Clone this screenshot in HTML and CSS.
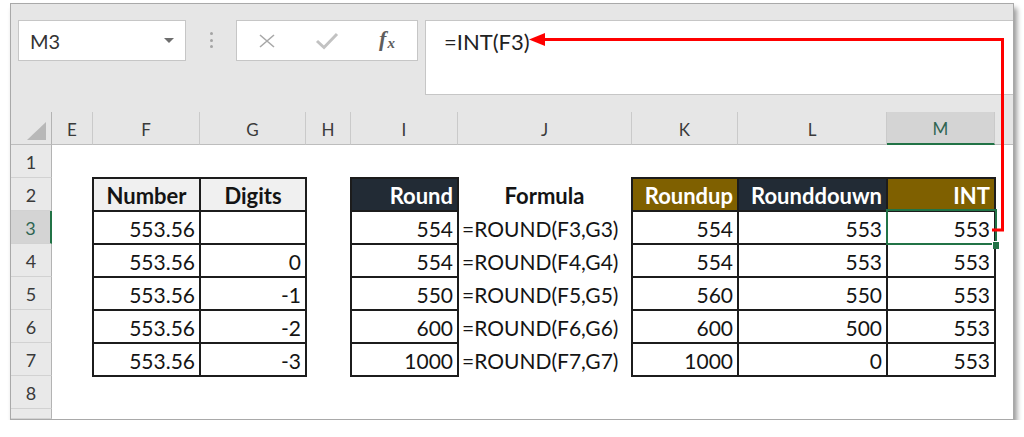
FILE: index.html
```html
<!DOCTYPE html>
<html>
<head>
<meta charset="utf-8">
<link rel="stylesheet" href="styles.css">
</head>
<body>
<div class="window">
  <div class="toolbar">
    <div class="namebox"><span>M3</span><svg class="caret" width="10" height="6" viewBox="0 0 10 6"><polygon points="0,0 10,0 5,5" fill="#6e6e6e"/></svg></div>
    <div class="grip"><i></i><i></i><i></i></div>
    <div class="fbuttons">
      <span class="fbtn"><svg width="18" height="14" viewBox="0 0 18 14"><path d="M2 1 L16 13 M16 1 L2 13" stroke="#a8a8a8" stroke-width="1.6" fill="none"/></svg></span>
      <span class="fbtn"><svg width="24" height="18" viewBox="0 0 24 18"><path d="M2 9 L9 15.5 L22 2" stroke="#c2c2c2" stroke-width="3" fill="none"/></svg></span>
      <span class="fbtn fx"><span class="fxtext">f<span class="fxsub">x</span></span></span>
    </div>
    <div class="formula">=INT(F3)</div>
  </div>
  <div class="sheet">
    <div class="corner"><svg width="19" height="18" viewBox="0 0 19 18"><polygon points="19,0 19,18 0,18" fill="#b8b8b8"/></svg></div>
    <div class="ch">E</div>
    <div class="ch">F</div>
    <div class="ch">G</div>
    <div class="ch">H</div>
    <div class="ch">I</div>
    <div class="ch">J</div>
    <div class="ch">K</div>
    <div class="ch">L</div>
    <div class="ch sel">M</div>
    <div class="ch last"></div>

    <div class="rh">1</div>

    <div class="rh">2</div>
    <div class="c b cf hg ctr bold">Number</div>
    <div class="c b cg hg ctr bold">Digits</div>
    <div class="c b ci hn r bold">Round</div>
    <div class="c cj ctr bold">Formula</div>
    <div class="c b ck hb r bold">Roundup</div>
    <div class="c b cl hn r bold">Rounddouwn</div>
    <div class="c b cm hb r bold">INT</div>

    <div class="rh sel">3</div>
    <div class="c b cf r">553.56</div>
    <div class="c b cg r"></div>
    <div class="c b ci r">554</div>
    <div class="c cj">=ROUND(F3,G3)</div>
    <div class="c b ck r">554</div>
    <div class="c b cl r">553</div>
    <div class="c b cm r active">553<span class="selbox"></span><span class="handle"></span></div>

    <div class="rh">4</div>
    <div class="c b cf r">553.56</div>
    <div class="c b cg r">0</div>
    <div class="c b ci r">554</div>
    <div class="c cj">=ROUND(F4,G4)</div>
    <div class="c b ck r">554</div>
    <div class="c b cl r">553</div>
    <div class="c b cm r">553</div>

    <div class="rh">5</div>
    <div class="c b cf r">553.56</div>
    <div class="c b cg r">-1</div>
    <div class="c b ci r">550</div>
    <div class="c cj">=ROUND(F5,G5)</div>
    <div class="c b ck r">560</div>
    <div class="c b cl r">550</div>
    <div class="c b cm r">553</div>

    <div class="rh">6</div>
    <div class="c b cf r">553.56</div>
    <div class="c b cg r">-2</div>
    <div class="c b ci r">600</div>
    <div class="c cj">=ROUND(F6,G6)</div>
    <div class="c b ck r">600</div>
    <div class="c b cl r">500</div>
    <div class="c b cm r">553</div>

    <div class="rh">7</div>
    <div class="c b cf r">553.56</div>
    <div class="c b cg r">-3</div>
    <div class="c b ci r">1000</div>
    <div class="c cj">=ROUND(F7,G7)</div>
    <div class="c b ck r">1000</div>
    <div class="c b cl r">0</div>
    <div class="c b cm r">553</div>

    <div class="rh">8</div>
    <div class="rh"></div>
  </div>
</div>
<svg class="arrow" width="1024" height="437" viewBox="0 0 1024 437">
  <path d="M542 39.5 H1002.5 V230 H992" stroke="#ff0000" stroke-width="3" fill="none"/>
  <polygon points="529,39.5 545,33 545,46" fill="#ff0000"/>
</svg>
</body>
</html>
```
FILE: styles.css
```css
body {
  margin: 0;
  background: #ffffff;
  font-family: Lato, "Open Sans", sans-serif;
}

.window {
  margin: 3px 0 0 10px;
  width: 1002px;
  height: 415px;
  border: 1px solid #a9a9a9;
  background: #e6e6e6;
  box-shadow: 3px 5px 5px rgba(0, 0, 0, 0.4);
  display: flex;
  flex-direction: column;
}

.toolbar {
  height: 108px;
  flex: none;
  box-sizing: border-box;
  padding: 16px 0 0 7px;
  display: flex;
  align-items: flex-start;
}

.namebox {
  width: 168px;
  height: 41px;
  box-sizing: border-box;
  border: 1px solid #c6c6c6;
  background: #fff;
  display: flex;
  align-items: center;
  justify-content: space-between;
  padding: 0 11px 0 11px;
  font-size: 20px;
  color: #333;
}

.caret {
  display: block;
}

.grip {
  margin: 12px 0 0 24px;
  width: 3px;
  display: flex;
  flex-direction: column;
  gap: 3.5px;
}

.grip i {
  display: block;
  width: 3px;
  height: 3px;
  border-radius: 50%;
  background: #a4a4a4;
}

.fbuttons {
  margin-left: 23px;
  width: 182px;
  height: 41px;
  box-sizing: border-box;
  border: 1px solid #c6c6c6;
  background: #fff;
  display: flex;
  align-items: center;
}

.fbtn {
  width: 60px;
  display: flex;
  justify-content: center;
  align-items: center;
}

.fxtext {
  font-family: "Liberation Serif", "DejaVu Serif", serif;
  font-style: italic;
  font-weight: 700;
  font-size: 22px;
  line-height: 1;
  color: #5e5e5e;
  padding-bottom: 3px;
}

.fxsub {
  font-size: 15px;
  position: relative;
  top: 2px;
  margin-left: 1px;
}

.formula {
  margin-left: 7px;
  flex: 1;
  height: 75px;
  box-sizing: border-box;
  border: 1px solid #c6c6c6;
  border-right: none;
  background: #fff;
  padding: 7px 0 0 18px;
  font-size: 22px;
  color: #222;
}

.sheet {
  flex: 1;
  background: #fff;
  display: grid;
  grid-template-columns: 41px 41px 107px 106px 45px 107px 174px 106px 149px 108px 1fr;
  grid-template-rows: repeat(9, 33px) 1fr;
  overflow: hidden;
}

.corner {
  background: #e6e6e6;
  border-right: 1px solid #b3b3b3;
  border-bottom: 1px solid #bdbdbd;
  display: flex;
  align-items: flex-end;
  justify-content: flex-end;
  padding: 0 5px 4px 0;
}

.ch {
  background: #e6e6e6;
  border-right: 1px solid #cacaca;
  border-bottom: 1px solid #bdbdbd;
  display: flex;
  align-items: center;
  justify-content: center;
  font-size: 17px;
  color: #3a3a3a;
  padding-top: 2px;
}

.ch.last {
  border-right: none;
}

.ch.sel {
  background: #d4d4d4;
  border-bottom: 2px solid #217346;
  color: #2f6552;
}

.rh {
  grid-column: 1;
  background: #e9e9e9;
  border-right: 1px solid #b3b3b3;
  border-bottom: 1px solid #d2d2d2;
  display: flex;
  align-items: center;
  justify-content: center;
  font-size: 18px;
  color: #3a3a3a;
  padding-top: 1px;
}

.rh.sel {
  background: #d4d4d4;
  border-right: 2px solid #217346;
  color: #2f6552;
}

.c {
  display: flex;
  align-items: center;
  padding: 2px 5px 0 5px;
  font-size: 21px;
  color: #141414;
  white-space: nowrap;
}

.cf { grid-column: 3; }
.cg { grid-column: 4; }
.ci { grid-column: 6; }
.cj { grid-column: 7; padding-left: 4px; }
.ck { grid-column: 8; }
.cl { grid-column: 9; }
.cm { grid-column: 10; }

.b {
  box-shadow: 0 0 0 1px #1c1c1c, inset 0 0 0 1px #1c1c1c;
}

.r {
  justify-content: flex-end;
}

.ctr {
  justify-content: center;
}

.bold {
  font-weight: 700;
  font-size: 22px;
}

.hg {
  background: #f0f0f0;
}

.hn {
  background: #222b35;
  color: #ffffff;
}

.hb {
  background: #7f6000;
  color: #ffffff;
}

.active {
  position: relative;
}

.selbox {
  position: absolute;
  top: -2px;
  left: -1px;
  right: -2px;
  bottom: -1px;
  border: 2px solid #217346;
}

.handle {
  position: absolute;
  right: -4px;
  bottom: -5px;
  width: 6px;
  height: 7px;
  background: #217346;
  border: 1px solid #fff;
  border-width: 1px 0 0 1px;
}

.arrow {
  position: absolute;
  left: 0;
  top: 0;
  pointer-events: none;
}
```
